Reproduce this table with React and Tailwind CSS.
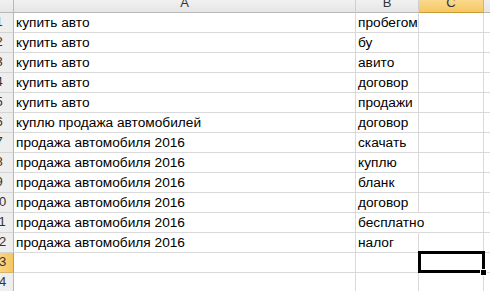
import React from 'react';

const rows = [
  ['купить авто', 'пробегом'],
  ['купить авто', 'бу'],
  ['купить авто', 'авито'],
  ['купить авто', 'договор'],
  ['купить авто', 'продажи'],
  ['куплю продажа автомобилей', 'договор'],
  ['продажа автомобиля 2016', 'скачать'],
  ['продажа автомобиля 2016', 'куплю'],
  ['продажа автомобиля 2016', 'бланк'],
  ['продажа автомобиля 2016', 'договор'],
  ['продажа автомобиля 2016', 'бесплатно'],
  ['продажа автомобиля 2016', 'налог'],
  ['', ''],
  ['', ''],
];

const activeRow = 13;

function HeaderCell({ label, active }) {
  return (
    <div
      className={
        'h-[20px] flex items-end justify-center text-[13px] border-r border-b ' +
        (active
          ? 'bg-gradient-to-b from-[#fbe3a6] to-[#f6c75f] border-r-[#d5b56a] border-b-[#c89c3b] text-[#333]'
          : 'bg-gradient-to-b from-[#f7f7f7] to-[#e6e6e6] border-r-[#cfcfcf] border-b-[#b8b8b8] text-[#333]')
      }
    >
      {label}
    </div>
  );
}

function RowHeader({ n, active }) {
  return (
    <div
      className={
        'h-[20px] flex items-end justify-center pb-[1px] text-[13px] border-r border-b ' +
        (active
          ? 'bg-gradient-to-r from-[#fbe3a6] to-[#f6c75f] border-r-[#c89c3b] border-b-[#d5b56a] text-[#333]'
          : 'bg-[#eeeeee] border-r-[#b8b8b8] border-b-[#d4d4d4] text-[#333]')
      }
    >
      {n}
    </div>
  );
}

// text spills into the next empty cell, as a spreadsheet does
function Cell({ children, spill }) {
  return (
    <div
      className={
        'relative z-10 h-[20px] flex items-end pl-[2px] pb-[2px] text-[13.7px] text-black border-b border-[#d9d9d9] whitespace-nowrap leading-none ' +
        (spill ? 'border-r border-r-transparent' : 'border-r')
      }
    >
      {children}
    </div>
  );
}

export default function App() {
  return (
    <div
      className="relative w-[490px] h-[291px] overflow-hidden bg-white"
      style={{ fontFamily: '"Liberation Sans", Arial, sans-serif' }}
    >
      <div className="ml-[-15px] mt-[-7px] grid grid-cols-[29px_342px_63px_65px_60px]">
        {/* column headers */}
        <div className="h-[20px] bg-gradient-to-b from-[#f7f7f7] to-[#e6e6e6] border-r border-b border-r-[#b8b8b8] border-b-[#b8b8b8]" />
        <HeaderCell label="A" />
        <HeaderCell label="B" />
        <HeaderCell label="C" active />
        <HeaderCell label="" />

        {rows.map(([a, b], i) => (
          <React.Fragment key={i}>
            <RowHeader n={i + 1} active={i + 1 === activeRow} />
            <Cell>{a}</Cell>
            <Cell spill={b === 'бесплатно'}>{b}</Cell>
            <Cell />
            <Cell />
          </React.Fragment>
        ))}
      </div>

      {/* active cell C13 */}
      <div className="absolute z-20 left-[418px] top-[251px] w-[67px] h-[22px] border-[3px] border-black" />
      <div className="absolute z-20 left-[480px] top-[269px] w-[7px] h-[7px] bg-black border border-white" />
    </div>
  );
}
